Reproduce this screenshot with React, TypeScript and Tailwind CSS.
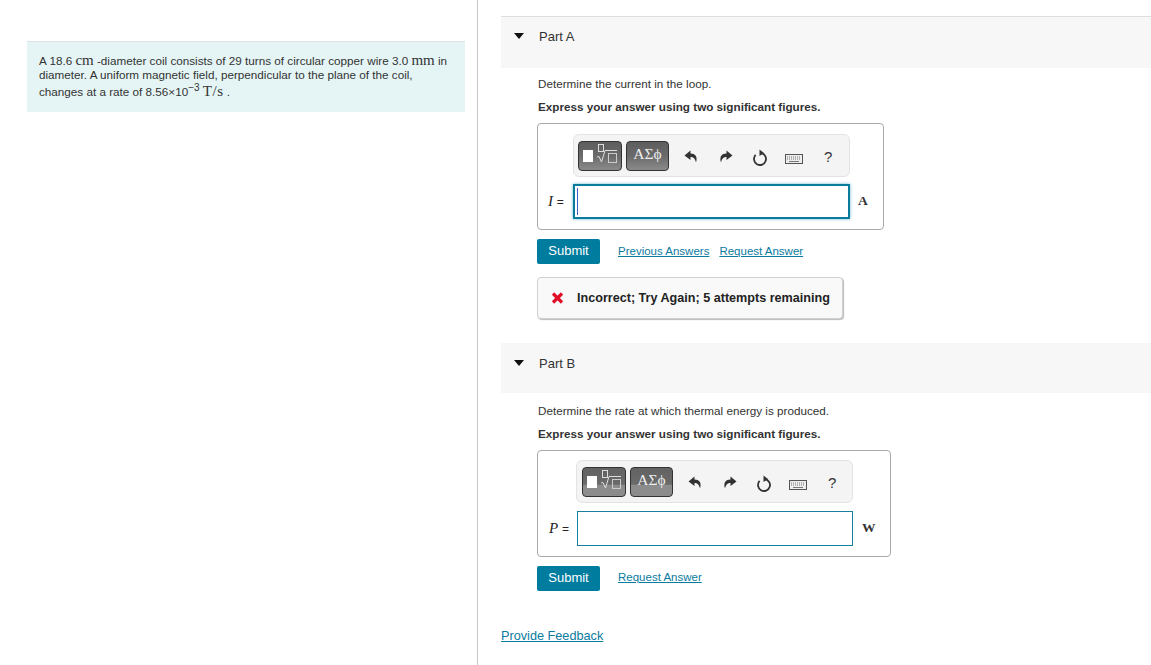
import React from 'react';

const serif = "font-['Liberation_Serif',serif]";

const Caret: React.FC = () => (
  <svg width="10" height="6" viewBox="0 0 10 6" className="mt-[5px] shrink-0">
    <path d="M0 0h10L5 6z" fill="#111" />
  </svg>
);

const PartHeader: React.FC<{ title: string; className: string }> = ({ title, className }) => (
  <div className={`flex items-start gap-[15px] bg-[#f7f7f7] pl-[13px] ${className}`}>
    <Caret />
    <span className="text-[13px] leading-[18px] font-medium text-[#333]">{title}</span>
  </div>
);

const TemplateButton: React.FC<{ fill: string }> = ({ fill }) => (
  <div className={`h-[30px] w-[44px] rounded-[4px] border border-[#333] ${fill}`}>
    <svg width="42" height="28" viewBox="0 0 42 28">
      <rect x="4" y="8" width="10" height="12" fill="#fff" />
      <rect x="19.500" y="2.500" width="5" height="7" fill="none" stroke="#ddd" />
      <path d="M18 15l2-0.500 2.500 5.500L26 8.500h12" fill="none" stroke="#ddd" />
      <rect x="29.500" y="11.500" width="8" height="9" fill="none" stroke="#ccc" />
    </svg>
  </div>
);

const SymbolButton: React.FC<{ fill: string }> = ({ fill }) => (
  <div className={`flex h-[30px] w-[43px] items-start justify-center rounded-[4px] border border-[#333] pt-[3px] text-[15.500px] leading-[18px] text-[#eee] ${fill} ${serif}`}>
    ΑΣϕ
  </div>
);

const Undo: React.FC = () => (
  <svg width="14" height="14" viewBox="0 0 14 14">
    <path d="M6.500 0.500L0.500 5.500 6.500 10V7c3 0 4.500 1.500 5.500 5.500 1.500-4.500 0.500-9-5.500-9z" fill="#333" />
  </svg>
);

const Redo: React.FC = () => (
  <svg width="14" height="14" viewBox="0 0 14 14">
    <path d="M7.500 0.500l6 5-6 4.500V7c-3 0-4.500 1.500-5.500 5.500C0.500 8 1.500 3.500 7.500 3.500z" fill="#333" />
  </svg>
);

const Reset: React.FC = () => (
  <svg width="16" height="17" viewBox="0 0 16 17">
    <path d="M8.500 4A6 6 0 1 1 3.600 5.900" fill="none" stroke="#333" strokeWidth="1.800" />
    <path d="M7.500 0.500l4.500 3.500-4.500 3z" fill="#333" />
  </svg>
);

const Keyboard: React.FC = () => (
  <svg width="18" height="10" viewBox="0 0 18 10">
    <rect x="0.500" y="0.500" width="17" height="9" fill="#eee" stroke="#555" />
    <path d="M2 3h14M2 5h14" stroke="#777" strokeWidth="1.200" strokeDasharray="1 1" />
    <path d="M4 7.500h10" stroke="#777" />
  </svg>
);

const Toolbar: React.FC<{ className: string; fill: string }> = ({ className, fill }) => (
  <div className={`flex h-[43px] w-[277px] items-center rounded-[6px] border border-[#e3e3e3] bg-[#f4f4f4] ${className}`}>
    <TemplateButton fill={fill} />
    <div className="ml-[4px]">
      <SymbolButton fill={fill} />
    </div>
    <div className="ml-[15px] mt-[3px]">
      <Undo />
    </div>
    <div className="ml-[21px] mt-[3px]">
      <Redo />
    </div>
    <div className="ml-[19px] mt-[3px]">
      <Reset />
    </div>
    <div className="ml-[17px] mt-[7px]">
      <Keyboard />
    </div>
    <span className="ml-[21px] mt-[3px] text-[15px] text-[#333]">?</span>
  </div>
);

const AnswerBox: React.FC<{
  symbol: string;
  unit: string;
  boxClass: string;
  toolbarClass: string;
  inputClass: string;
  labelClass: string;
  unitClass: string;
  fill: string;
  focused?: boolean;
}> = ({ symbol, unit, boxClass, toolbarClass, inputClass, labelClass, unitClass, fill, focused }) => (
  <div className={`h-[107px] rounded-[4px] border border-[#aaa] bg-white ${boxClass}`}>
    <Toolbar className={toolbarClass} fill={fill} />
    <div className={`flex items-center ${focused ? 'mt-[7px]' : 'mt-[8px]'}`}>
      <span className={`text-[15px] text-[#222] ${serif} ${labelClass}`}>
        <i>{symbol}</i> <span className="font-['Liberation_Sans',sans-serif] text-[12px]">=</span>
      </span>
      <div
        className={`flex h-[35px] items-center bg-white ${
          focused
            ? 'border-2 border-[#0c7c9c] pl-[2px] shadow-[0_0_3px_#6cb6cc]'
            : 'border border-[#1a7f9c]'
        } ${inputClass}`}
      >
        {focused && <div className="h-[27px] w-px bg-[#3a5fc0]" />}
      </div>
      <span className={`text-[13.500px] font-bold text-[#333] ${serif} ${unitClass}`}>{unit}</span>
    </div>
  </div>
);

const SubmitButton: React.FC = () => (
  <button className="flex h-[25px] w-[63px] items-center justify-center rounded-[2px] bg-[#007c9e] pb-[2px] text-[13px] text-white">
    Submit
  </button>
);

const LinkText: React.FC<{ children: React.ReactNode }> = ({ children }) => (
  <a href="#" className="text-[11.500px] leading-[14px] font-medium text-[#0b7ba0] underline">
    {children}
  </a>
);

const App: React.FC = () => {
  return (
    <div className="flex h-[665px] w-[1151px] overflow-hidden bg-white font-['Liberation_Sans',sans-serif]">
      <div className="h-full w-[478px] shrink-0 border-r border-[#c8c8c8] pl-[27px] pr-[12px] pt-[41px]">
        <div className="h-[71px] border-t border-[#dde3e5] bg-[#e5f5f6] px-[12px] pt-[11px] text-[11.700px] leading-[14px] text-[#333]">
          <p>
            A 18.6 <span className={`text-[15px] ${serif}`}>cm</span> -diameter coil consists of 29 turns of circular copper wire 3.0{' '}
            <span className={`text-[15px] ${serif}`}>mm</span> in diameter. A uniform magnetic field, perpendicular to the plane of the coil, changes at a rate of 8.56×10
            <sup className="text-[10px]">−3</sup> <span className={`text-[15px] leading-[19px] tracking-[0.5px] ${serif}`}>T/s</span> .
          </p>
        </div>
      </div>

      <div className="flex-1 pl-[23px] pt-[16px]">
        <PartHeader title="Part A" className="h-[52px] border-t border-[#dedede] pt-[11px]" />
        <div className="pl-[36px]">
          <p className="ml-px mt-[8px] text-[11.700px] leading-[16px] text-[#333]">Determine the current in the loop.</p>
          <p className="ml-px mt-[7px] text-[11.700px] leading-[16px] font-bold text-[#333]">Express your answer using two significant figures.</p>
          <AnswerBox
            symbol="I"
            unit="A"
            focused
            fill="bg-[linear-gradient(#5e5e5e_0%,#6a6a6a_50%,#8a8a8a_100%)]"
            boxClass="mt-[8px] w-[347px] pt-[10px]"
            toolbarClass="ml-[35px] pl-[4px]"
            inputClass="w-[277px]"
            labelClass="ml-[10px] w-[25px]"
            unitClass="ml-[8px]"
          />
          <div className="mt-[9px] flex items-center">
            <SubmitButton />
            <div className="mb-[2px] ml-[18px] flex gap-[10px]">
              <LinkText>Previous Answers</LinkText>
              <LinkText>Request Answer</LinkText>
            </div>
          </div>
          <div className="mt-[13px] flex h-[42px] w-[306px] items-center rounded-[4px] border border-[#d0d0d0] bg-[#f9f9f9] pl-[13px] text-[12.600px] font-bold text-[#222] shadow-[1px_1px_1px_#bbb]">
            <svg width="13" height="12" viewBox="0 0 13 12">
              <path d="M2 1.500l9 9M11 1.500l-9 9" stroke="#e0102a" strokeWidth="3.200" />
            </svg>
            <span className="ml-[13px]">Incorrect; Try Again; 5 attempts remaining</span>
          </div>
        </div>

        <PartHeader title="Part B" className="mt-[24px] h-[50px] pt-[12px]" />
        <div className="pl-[36px]">
          <p className="ml-px mt-[10px] text-[11.700px] leading-[16px] text-[#333]">Determine the rate at which thermal energy is produced.</p>
          <p className="ml-px mt-[7px] text-[11.700px] leading-[16px] font-bold text-[#333]">Express your answer using two significant figures.</p>
          <AnswerBox
            symbol="P"
            unit="W"
            fill="bg-[linear-gradient(#626262_0%,#6a6a6a_58%,#8c8c8c_62%,#8c8c8c_100%)]"
            boxClass="mt-[8px] w-[354px] pt-[9px]"
            toolbarClass="ml-[38px] pl-[5px]"
            inputClass="w-[276px]"
            labelClass="ml-[11px] w-[28px]"
            unitClass="ml-[9px]"
          />
          <div className="mt-[9px] flex items-center">
            <SubmitButton />
            <div className="mb-[4px] ml-[18px] flex">
              <LinkText>Request Answer</LinkText>
            </div>
          </div>
        </div>
        <a href="#" className="mt-[36px] block text-[12.700px] leading-[18px] text-[#0b7ba0] underline">
          Provide Feedback
        </a>
      </div>
    </div>
  );
};

export default App;
